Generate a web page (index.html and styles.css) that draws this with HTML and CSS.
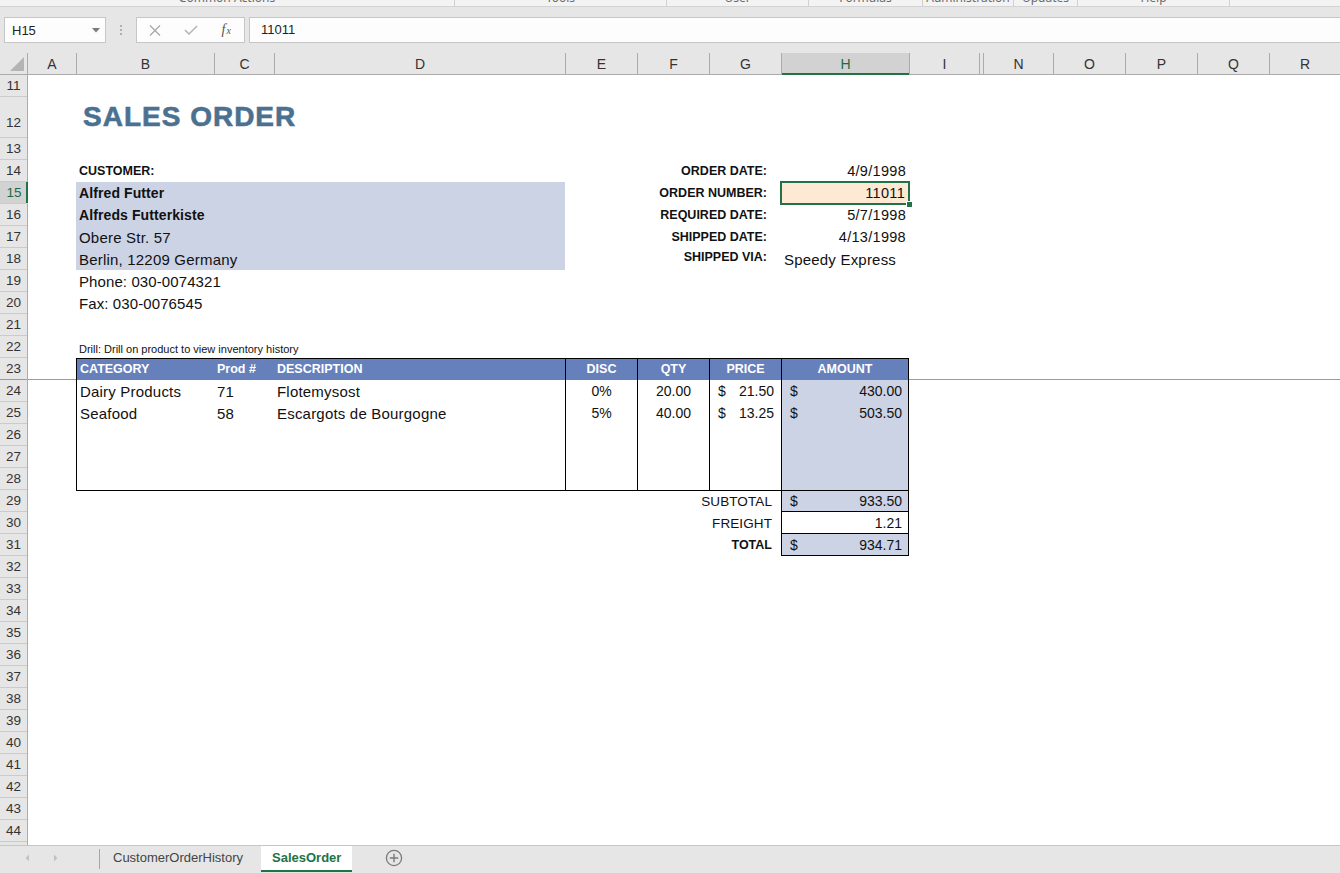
FILE: index.html
```html
<!DOCTYPE html>
<html lang="en">
<head>
<meta charset="utf-8">
<title>SalesOrder</title>
<link rel="stylesheet" href="styles.css">
</head>
<body>
<div class="app">
  <div class="ribbon">
    <div class="grp g1"><span>Common Actions</span></div>
    <div class="grp g2"><span>Tools</span></div>
    <div class="grp g3"><span>User</span></div>
    <div class="grp g4"><span>Formulas</span></div>
    <div class="grp g5"><span>Administration</span></div>
    <div class="grp g6"><span>Updates</span></div>
    <div class="grp g7"><span>Help</span></div>
  </div>

  <div class="fbar">
    <div class="namebox">
      <span>H15</span>
      <svg class="dd" width="8" height="5" viewBox="0 0 8 5"><polygon points="0,0 8,0 4,4.5" fill="#7a7a7a"/></svg>
    </div>
    <div class="grip">
      <svg width="2" height="10" viewBox="0 0 2 10"><rect x="0" y="0" width="2" height="2" fill="#b0b0b0"/><rect x="0" y="4" width="2" height="2" fill="#b0b0b0"/><rect x="0" y="8" width="2" height="2" fill="#b0b0b0"/></svg>
    </div>
    <div class="fxbox">
      <div class="slot">
        <svg width="12" height="11" viewBox="0 0 12 11"><path d="M1 0.5 L11 10.5 M11 0.5 L1 10.5" stroke="#a9a9a9" stroke-width="1.3" fill="none"/></svg>
      </div>
      <div class="slot">
        <svg width="14" height="10" viewBox="0 0 14 10"><path d="M1 5 L5 9 L13 1" stroke="#b5b5b5" stroke-width="1.5" fill="none"/></svg>
      </div>
      <div class="slot"><span class="fx"><i>f</i><i class="x">x</i></span></div>
    </div>
    <div class="finput">11011</div>
  </div>

  <div class="colhead">
    <div class="corner">
      <svg width="27" height="21" viewBox="0 0 27 21"><polygon points="24,4 24,18 10,18" fill="#b4b4b4"/></svg>
    </div>
    <div class="cols">
      <div>A</div><div>B</div><div>C</div><div>D</div><div>E</div><div>F</div><div>G</div>
      <div class="sel">H</div><div>I</div><div class="hid"></div>
      <div>N</div><div>O</div><div>P</div><div>Q</div><div>R</div>
    </div>
  </div>

  <div class="sheet">
    <div class="rowheads">
      <div class="rh">11</div>
      <div class="rh tall">12</div>
      <div class="rh">13</div>
      <div class="rh">14</div>
      <div class="rh cur">15</div>
      <div class="rh">16</div>
      <div class="rh">17</div>
      <div class="rh">18</div>
      <div class="rh">19</div>
      <div class="rh">20</div>
      <div class="rh">21</div>
      <div class="rh">22</div>
      <div class="rh frz">23</div>
      <div class="rh">24</div>
      <div class="rh">25</div>
      <div class="rh">26</div>
      <div class="rh">27</div>
      <div class="rh">28</div>
      <div class="rh">29</div>
      <div class="rh">30</div>
      <div class="rh">31</div>
      <div class="rh">32</div>
      <div class="rh">33</div>
      <div class="rh">34</div>
      <div class="rh">35</div>
      <div class="rh">36</div>
      <div class="rh">37</div>
      <div class="rh">38</div>
      <div class="rh">39</div>
      <div class="rh">40</div>
      <div class="rh">41</div>
      <div class="rh">42</div>
      <div class="rh">43</div>
      <div class="rh">44</div>
      <div class="rh">45</div>
    </div>

    <div class="cells">
      <div class="freeze"></div>

      <div class="title">SALES ORDER</div>

      <div class="c-label">CUSTOMER:</div>
      <div class="cust">
        <div class="b">Alfred Futter</div>
        <div class="b">Alfreds Futterkiste</div>
        <div>Obere Str. 57</div>
        <div>Berlin, 12209 Germany</div>
      </div>
      <div class="phone">Phone: 030-0074321</div>
      <div class="fax">Fax: 030-0076545</div>

      <div class="info">
        <div class="lbl">ORDER DATE:</div><div class="val">4/9/1998</div>
        <div class="lbl">ORDER NUMBER:</div><div class="val sel">11011</div>
        <div class="lbl">REQUIRED DATE:</div><div class="val">5/7/1998</div>
        <div class="lbl">SHIPPED DATE:</div><div class="val">4/13/1998</div>
        <div class="lbl up">SHIPPED VIA:</div><div class="val left">Speedy Express</div>
      </div>

      <div class="drill">Drill: Drill on product to view inventory history</div>

      <div class="slabel r29">SUBTOTAL</div>
      <div class="sval fill r29"><span>$</span><span>933.50</span></div>
      <div class="slabel r30">FREIGHT</div>
      <div class="sval r30"><span></span><span>1.21</span></div>
      <div class="slabel tot r31">TOTAL</div>
      <div class="sval fill r31"><span>$</span><span>934.71</span></div>

      <div class="otable">
        <div class="h tl">CATEGORY</div>
        <div class="h tl">Prod #</div>
        <div class="h tl">DESCRIPTION</div>
        <div class="h vl tc">DISC</div>
        <div class="h vl tc">QTY</div>
        <div class="h vl tc">PRICE</div>
        <div class="h vl tc">AMOUNT</div>

        <div class="d tl">Dairy Products</div>
        <div class="d tl">71</div>
        <div class="d tl">Flotemysost</div>
        <div class="d vl tc num">0%</div>
        <div class="d vl tc num">20.00</div>
        <div class="d vl money num"><span>$</span><span>21.50</span></div>
        <div class="d vl amt num"><span>$</span><span>430.00</span></div>

        <div class="d tl">Seafood</div>
        <div class="d tl">58</div>
        <div class="d tl">Escargots de Bourgogne</div>
        <div class="d vl tc num">5%</div>
        <div class="d vl tc num">40.00</div>
        <div class="d vl money num"><span>$</span><span>13.25</span></div>
        <div class="d vl amt num"><span>$</span><span>503.50</span></div>

        <div class="blank wide"></div>
        <div class="blank vl"></div>
        <div class="blank vl"></div>
        <div class="blank vl"></div>
        <div class="blank vl amt"></div>
      </div>
    </div>
  </div>

  <div class="tabs">
    <svg class="nav" width="100" height="27" viewBox="0 0 100 27">
      <polygon points="29,8.5 29,15.5 25.5,12" fill="#c2c2c2"/>
      <polygon points="54,8.5 54,15.5 57.5,12" fill="#c2c2c2"/>
      <line x1="99.5" y1="3" x2="99.5" y2="23" stroke="#a6a6a6" stroke-width="1"/>
    </svg>
    <div class="tab">CustomerOrderHistory</div>
    <div class="tab active">SalesOrder</div>
    <svg class="add" width="18" height="18" viewBox="0 0 18 18">
      <circle cx="9" cy="9" r="7.6" fill="none" stroke="#7a7a7a" stroke-width="1.3"/>
      <path d="M9 4.8 V13.2 M4.8 9 H13.2" stroke="#7a7a7a" stroke-width="1.4"/>
    </svg>
  </div>
</div>
</body>
</html>
```

FILE: styles.css
```css
html, body {
  margin: 0;
  padding: 0;
}

body {
  width: 1340px;
  height: 873px;
  overflow: hidden;
  background: #ffffff;
  font-family: "Liberation Sans", Arial, sans-serif;
  color: #111;
}

.app {
  display: flex;
  flex-direction: column;
  width: 1340px;
  height: 873px;
}

/* ---------- ribbon remnant ---------- */
.ribbon {
  height: 7px;
  flex: none;
  box-sizing: border-box;
  border-bottom: 1px solid #d3d3d3;
  background: #f3f3f3;
  display: flex;
  overflow: hidden;
}

.grp {
  flex: none;
  box-sizing: border-box;
  border-right: 1px solid #d0d0d0;
  text-align: center;
  font-family: "Noto Sans", "Liberation Sans", sans-serif;
  font-size: 12px;
  line-height: 14px;
  color: #6a6a6a;
  white-space: nowrap;
}

.grp span {
  display: block;
  margin-top: -9px;
}

.g1 { width: 455px; }
.g2 { width: 212px; }
.g3 { width: 142px; }
.g4 { width: 114px; }
.g5 { width: 91px; }
.g6 { width: 64px; }
.g7 { width: 152px; }

/* ---------- formula bar ---------- */
.fbar {
  height: 46px;
  flex: none;
  box-sizing: border-box;
  padding-top: 10px;
  background: #e6e6e6;
  display: flex;
  align-items: flex-start;
}

.namebox {
  margin-left: 4px;
  width: 102px;
  height: 26px;
  box-sizing: border-box;
  background: #fdfdfd;
  border: 1px solid #c6c6c6;
  display: flex;
  align-items: center;
  justify-content: space-between;
  padding: 0 5px 0 7px;
  font-size: 13px;
  color: #222;
}

.grip {
  width: 30px;
  height: 26px;
  display: flex;
  align-items: center;
  justify-content: center;
}

.fxbox {
  width: 109px;
  height: 26px;
  box-sizing: border-box;
  background: #fdfdfd;
  border: 1px solid #c6c6c6;
  display: flex;
}

.fxbox .slot {
  width: 36px;
  display: flex;
  align-items: center;
  justify-content: center;
}

.fx {
  font-family: "Liberation Serif", "Times New Roman", serif;
  color: #555;
  font-size: 14px;
  line-height: 14px;
}

.fx .x {
  font-size: 10px;
  margin-left: 1px;
}

.finput {
  flex: 1;
  margin-left: 4px;
  height: 26px;
  box-sizing: border-box;
  background: #fdfdfd;
  border: 1px solid #c6c6c6;
  border-right: none;
  padding-left: 11px;
  font-size: 13px;
  line-height: 24px;
  color: #222;
}

/* ---------- column headers ---------- */
.colhead {
  height: 22px;
  flex: none;
  box-sizing: border-box;
  border-bottom: 1px solid #ababab;
  background: #e6e6e6;
  display: flex;
}

.corner {
  width: 28px;
  flex: none;
  box-sizing: border-box;
  border-right: 1px solid #ababab;
}

.corner svg {
  display: block;
}

.cols {
  flex: 1;
  display: grid;
  grid-template-columns: 48px 138px 60px 291px 72px 72px 72px 128px 70px 4px 70px 72px 72px 72px 1fr;
}

.cols > div {
  border-left: 1px solid #ababab;
  text-align: center;
  font-size: 14px;
  line-height: 22px;
  color: #333;
}

.cols > div:first-child {
  border-left: none;
}

.cols > .sel {
  background: #d2d2d2;
  color: #1e6b41;
  box-shadow: inset 0 -2px 0 #217346;
}

/* ---------- sheet ---------- */
.sheet {
  height: 770px;
  flex: none;
  display: flex;
  overflow: hidden;
  background: #fff;
}

.rowheads {
  width: 28px;
  flex: none;
  box-sizing: border-box;
  border-right: 1px solid #ababab;
  background: #e6e6e6;
  display: flex;
  flex-direction: column;
}

.rh {
  height: 22px;
  flex: none;
  box-sizing: border-box;
  border-bottom: 1px solid #cbcbcb;
  text-align: center;
  font-size: 13.5px;
  line-height: 22px;
  color: #333;
}

.rh.tall {
  height: 41px;
  padding-top: 15px;
}

.rh.cur {
  width: 28px;
  background: #d2d2d2;
  color: #1e6b41;
  box-shadow: inset -2px 0 0 #217346;
}

.rh.frz {
  border-bottom-color: #9a9a9a;
}

.cells {
  flex: 1;
  display: grid;
  grid-template-columns: 48px 138px 60px 291px 72px 72px 72px 128px 70px 4px 70px 72px 72px 72px 1fr;
  grid-template-rows: 22px 41px repeat(33, 22px);
  font-size: 15px;
  color: #111;
}

.freeze {
  grid-column: 1 / -1;
  grid-row: 13;
  border-bottom: 1px solid #9a9a9a;
}

.title {
  grid-column: 2 / 5;
  grid-row: 2;
  align-self: end;
  padding: 0 0 5px 7px;
  font-weight: bold;
  font-size: 28px;
  line-height: 32px;
  letter-spacing: 1px;
  color: #4b7191;
  -webkit-text-stroke: 0.6px #4b7191;
}

.c-label {
  grid-column: 2 / 5;
  grid-row: 4;
  padding-left: 3px;
  font-weight: bold;
  font-size: 12.5px;
  line-height: 23px;
}

.cust {
  grid-column: 2 / 5;
  grid-row: 5 / 9;
  background: #ccd3e5;
  display: flex;
  flex-direction: column;
}

.cust > div {
  height: 22px;
  line-height: 23px;
  padding-left: 3px;
  letter-spacing: 0.2px;
}

.cust > .b {
  font-weight: bold;
  font-size: 14px;
  letter-spacing: 0.1px;
}

.phone,
.fax {
  grid-column: 2 / 5;
  padding-left: 3px;
  line-height: 23px;
  letter-spacing: 0.1px;
}

.phone { grid-row: 9; }
.fax { grid-row: 10; }

.info {
  grid-column: 5 / 9;
  grid-row: 4 / 9;
  display: grid;
  grid-template-columns: 1fr 128px;
  grid-template-rows: repeat(5, 22px);
}

.info .lbl {
  text-align: right;
  padding-right: 14px;
  font-weight: bold;
  font-size: 12.5px;
  line-height: 23px;
}

.info .lbl.up {
  line-height: 19px;
}

.info .val {
  text-align: right;
  padding-right: 3px;
  line-height: 23px;
  font-size: 14.5px;
  letter-spacing: 0.3px;
}

.info .val.left {
  text-align: left;
  padding-left: 3px;
  padding-right: 0;
  font-size: 15px;
  letter-spacing: 0.2px;
}

.info .val.sel {
  position: relative;
  background: #fde9d4;
  outline: 2px solid #217346;
  outline-offset: -1px;
  padding-right: 4px;
}

.info .val.sel::after {
  content: "";
  position: absolute;
  right: -4px;
  bottom: -4px;
  width: 5px;
  height: 5px;
  background: #217346;
  border: 1px solid #fff;
}

.drill {
  grid-column: 2 / 6;
  grid-row: 12;
  align-self: end;
  padding: 0 0 2px 3px;
  font-size: 11px;
  line-height: 14px;
}

/* ---------- order table ---------- */
.otable {
  grid-column: 2 / 9;
  grid-row: 13 / 19;
  align-self: start;
  height: 133px;
  box-sizing: border-box;
  border: 1px solid #000;
  background: #fff;
  display: grid;
  grid-template-columns: 137px 60px 291px 72px 72px 72px 1fr;
  grid-template-rows: 21px repeat(5, 22px);
}

.otable .vl {
  border-left: 1px solid #000;
}

.otable .h {
  background: #6680bb;
  color: #fff;
  font-weight: bold;
  font-size: 12.5px;
  line-height: 21px;
}

.otable .d {
  line-height: 23px;
  letter-spacing: 0.2px;
}

.otable .num {
  font-size: 14px;
  letter-spacing: 0;
}

.otable .tl {
  padding-left: 3px;
}

.otable .tc {
  text-align: center;
}

.otable .money {
  display: flex;
  justify-content: space-between;
  padding: 0 7px 0 8px;
}

.otable .amt {
  background: #ccd3e5;
  display: flex;
  justify-content: space-between;
  padding: 0 6px 0 8px;
}

.otable .blank {
  grid-row: span 3;
}

.otable .blank.wide {
  grid-column: span 3;
}

/* ---------- totals ---------- */
.slabel {
  grid-column: 6 / 8;
  text-align: right;
  padding-right: 9px;
  font-size: 13.5px;
  line-height: 23px;
  letter-spacing: 0.1px;
}

.slabel.tot {
  font-weight: bold;
  font-size: 12.5px;
  letter-spacing: 0;
}

.sval {
  grid-column: 8;
  box-sizing: border-box;
  border: 1px solid #000;
  border-top: none;
  display: flex;
  justify-content: space-between;
  padding: 0 6px 0 8px;
  font-size: 14px;
  line-height: 22px;
}

.sval.fill {
  background: #ccd3e5;
}

.r29 { grid-row: 19; }
.r30 { grid-row: 20; }
.r31 { grid-row: 21; }

/* ---------- sheet tabs ---------- */
.tabs {
  height: 28px;
  flex: none;
  box-sizing: border-box;
  border-top: 1px solid #c6c6c6;
  background: #e6e6e6;
  display: flex;
  align-items: flex-start;
}

.nav {
  display: block;
  flex: none;
}

.tab {
  height: 24px;
  line-height: 24px;
  font-size: 13px;
  color: #444;
  white-space: nowrap;
  padding: 0 18px 0 13px;
}

.tab.active {
  background: #fff;
  color: #217346;
  font-weight: bold;
  padding: 0 11px;
  border-bottom: 2px solid #217346;
}

.add {
  display: block;
  margin: 3px 0 0 33px;
}
```
